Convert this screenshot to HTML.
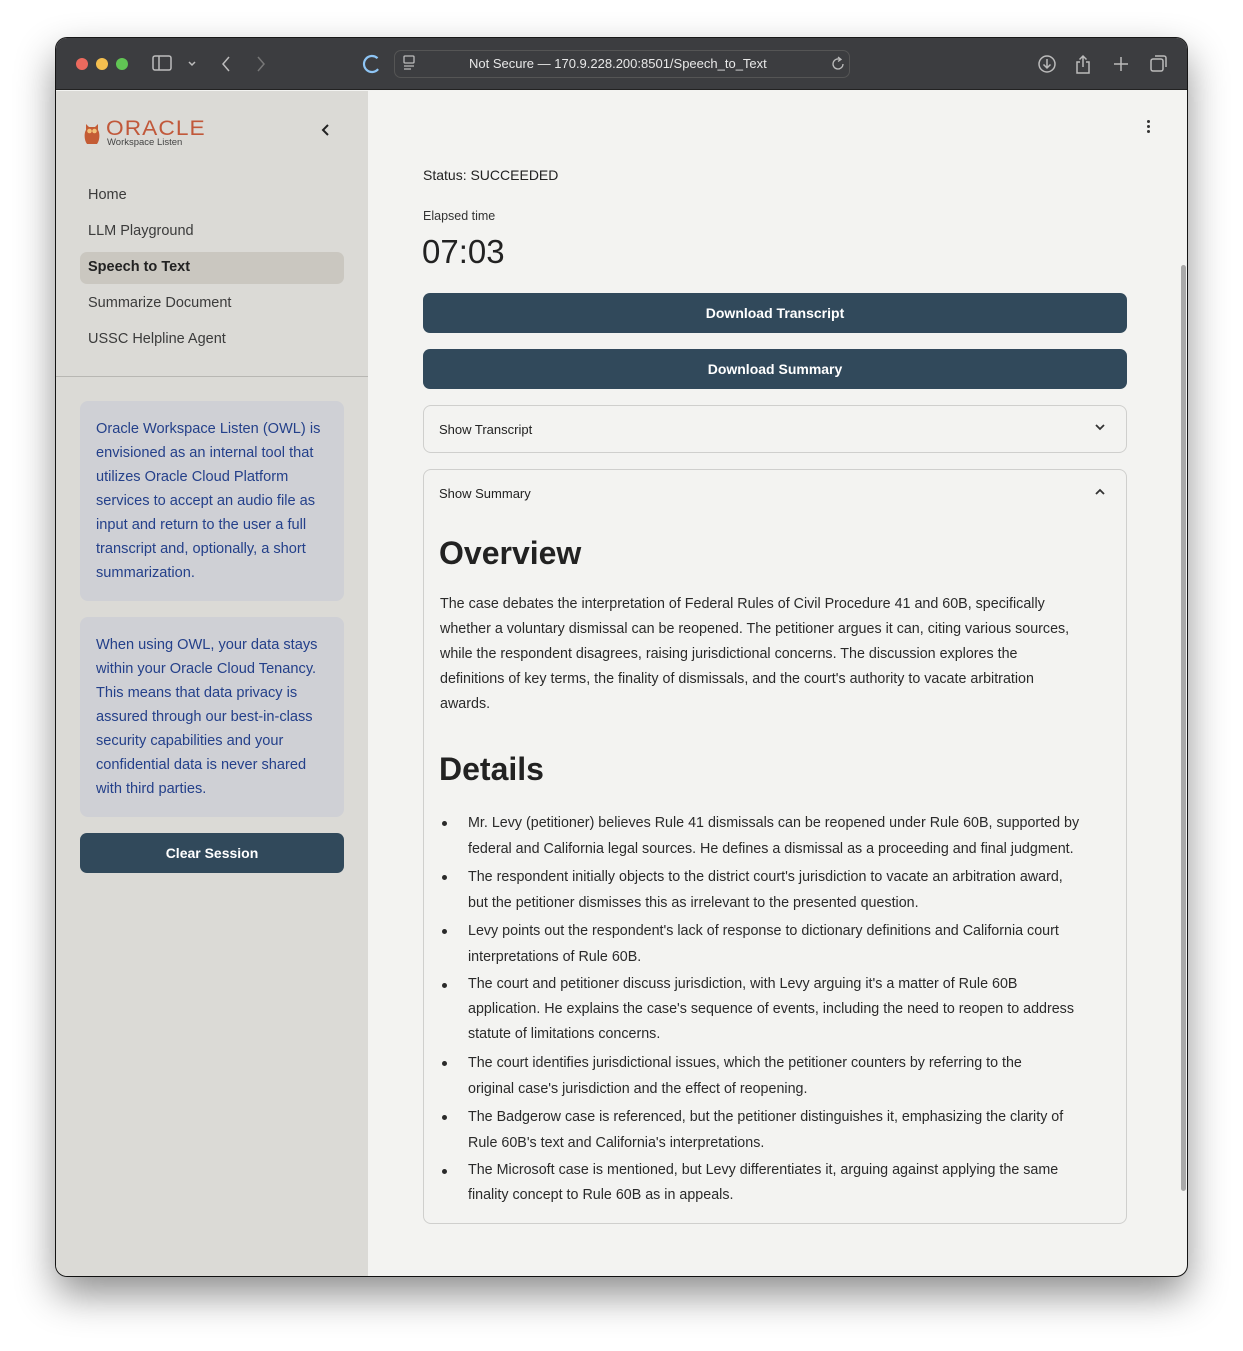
<!DOCTYPE html>
<html><head><meta charset="utf-8"><style>
*{box-sizing:border-box;margin:0;padding:0}
body{width:1243px;height:1351px;background:#fff;font-family:"Liberation Sans",sans-serif;position:relative;overflow:hidden}
.win{position:absolute;left:56px;top:38px;width:1131px;height:1238px;border-radius:11px;overflow:hidden;background:#f3f3f1;box-shadow:0 18px 40px rgba(0,0,0,.45),0 0 0 1px #1a1a1a}
.bar{position:absolute;left:0;top:0;width:100%;height:52px;background:#3c3d40;border-bottom:1px solid #222}
.side{position:absolute;left:0;top:53px;width:312px;height:1186px;background:#dbdad6}
.a{position:absolute;white-space:nowrap}
.nav{left:32px;font-size:14.5px;color:#3b3b3b}
.box{position:absolute;left:24px;width:264px;height:200px;background:#cfd0d5;border-radius:8px}
.info{left:40px;font-size:14.6px;color:#24408a}
.btn{position:absolute;background:#31495b;border-radius:7px;color:#fff;font-size:14px;font-weight:bold;text-align:center;line-height:40px;height:40px}
.exp{position:absolute;left:367px;width:704px;border:1px solid #cfcfcd;border-radius:8px}
.p{left:384px;font-size:14.3px;color:#2a2a2a}
.dot{position:absolute;left:386px;width:5px;height:5px;border-radius:50%;background:#2a2a2a}
.li{left:412px;font-size:14.3px;color:#2a2a2a}
</style></head><body>
<div class="win">
<div class="bar">
 <div style="position:absolute;left:20px;top:20px;width:12px;height:12px;border-radius:50%;background:#ec6a5e"></div>
 <div style="position:absolute;left:40px;top:20px;width:12px;height:12px;border-radius:50%;background:#f4bf4f"></div>
 <div style="position:absolute;left:60px;top:20px;width:12px;height:12px;border-radius:50%;background:#61c554"></div>
 <svg class="a" style="left:96px;top:16px" width="150" height="22" fill="none" stroke="#bdbdbd" stroke-width="1.5">
  <rect x="1" y="2" width="18" height="14" rx="2"/><line x1="7" y1="2" x2="7" y2="16"/>
  <path d="M37 8l3 3 3-3"/><path d="M77 3l-6 7 6 7"/><path d="M106 3l6 7-6 7" stroke="#777"/>
 </svg>
 <svg class="a" style="left:305px;top:15px" width="22" height="22"><circle cx="11" cy="11" r="8" fill="none" stroke="#8ec5f5" stroke-width="2.2" stroke-dasharray="38 12" transform="rotate(40 11 11)"/></svg>
 <div style="position:absolute;left:338px;top:12px;width:456px;height:28px;border:1px solid #555;border-radius:7px;background:#3c3d40"></div>
 <svg class="a" style="left:346px;top:17px" width="14" height="18" fill="none" stroke="#bbb" stroke-width="1.3"><rect x="2" y="1" width="10" height="7" rx="1"/><line x1="2" y1="11" x2="12" y2="11"/><line x1="2" y1="14" x2="9" y2="14"/></svg>
 <div class="a" style="left:413px;top:18px;font-size:13px;color:#e8e8e8">Not Secure — 170.9.228.200:8501/Speech_to_Text</div>
 <svg class="a" style="left:774px;top:18px" width="16" height="16" fill="none" stroke="#bbb" stroke-width="1.3"><path d="M13 8a5 5 0 1 1-3-4.6"/><path d="M8 1l3 2.4-3 2"/></svg>
 <svg class="a" style="left:980px;top:15px" width="140" height="22" fill="none" stroke="#bbb" stroke-width="1.5">
  <circle cx="11" cy="11" r="8"/><path d="M11 6v9M7.5 11.5l3.5 3.5 3.5-3.5"/>
  <path d="M44 9h-3v11h12V9h-3M47 3v11M43.5 6.5L47 3l3.5 3.5"/>
  <path d="M85 4v14M78 11h14"/>
  <rect x="115" y="6" width="12" height="12" rx="2"/><path d="M119 3h9a2 2 0 0 1 2 2v9"/>
 </svg>
</div>
<div class="side">
 <svg class="a" style="left:26px;top:29px" width="20" height="28"><path d="M4 4l3 3h6l3-3v6c2 3 2 10-1 14h-10c-3-4-3-11-1-14z" fill="#c45c35"/><circle cx="7.5" cy="11" r="2.3" fill="#f2c27a"/><circle cx="12.5" cy="11" r="2.3" fill="#f2c27a"/></svg>
 <div class="a" style="left:50px;top:26px;font-size:21px;color:#c1583a;letter-spacing:1px;transform:scaleX(1.08);transform-origin:left">ORACLE</div>
 <div class="a" style="left:51px;top:46px;font-size:9.5px;color:#444">Workspace Listen</div>
 <svg class="a" style="left:264px;top:32px" width="12" height="14" fill="none" stroke="#222" stroke-width="2"><path d="M8 2L3 7l5 5"/></svg>
 <div class="a nav" style="top:96px">Home</div>
 <div class="a nav" style="top:132px">LLM Playground</div>
 <div style="position:absolute;left:24px;top:161px;width:264px;height:32px;background:#cac7c0;border-radius:7px"></div>
 <div class="a nav" style="top:168px;font-weight:bold;color:#222">Speech to Text</div>
 <div class="a nav" style="top:204px">Summarize Document</div>
 <div class="a nav" style="top:240px">USSC Helpline Agent</div>
 <div style="position:absolute;left:0;top:285px;width:312px;height:1px;background:#b8b7b3"></div>
 <div class="box" style="top:310px"></div>
 <div class="a info" style="top:326px;line-height:24px">Oracle Workspace Listen (OWL) is<br>envisioned as an internal tool that<br>utilizes Oracle Cloud Platform<br>services to accept an audio file as<br>input and return to the user a full<br>transcript and, optionally, a short<br>summarization.</div>
 <div class="box" style="top:526px"></div>
 <div class="a info" style="top:542px;line-height:24px">When using OWL, your data stays<br>within your Oracle Cloud Tenancy.<br>This means that data privacy is<br>assured through our best-in-class<br>security capabilities and your<br>confidential data is never shared<br>with third parties.</div>
 <div class="btn" style="left:24px;top:742px;width:264px">Clear Session</div>
</div>
<div style="position:absolute;left:1091px;top:82px;width:4px;height:14px">
 <div style="width:3px;height:3px;border-radius:50%;background:#333;margin-bottom:2px"></div><div style="width:3px;height:3px;border-radius:50%;background:#333;margin-bottom:2px"></div><div style="width:3px;height:3px;border-radius:50%;background:#333"></div></div>
<div class="a" style="left:367px;top:129px;font-size:14px;color:#222">Status: SUCCEEDED</div>
<div class="a" style="left:367px;top:171px;font-size:12.5px;color:#333">Elapsed time</div>
<div class="a" style="left:366px;top:195px;font-size:33px;color:#222">07:03</div>
<div class="btn" style="left:367px;top:255px;width:704px">Download Transcript</div>
<div class="btn" style="left:367px;top:311px;width:704px">Download Summary</div>
<div class="exp" style="top:367px;height:48px"></div>
<div class="a" style="left:383px;top:384px;font-size:13px;color:#222">Show Transcript</div>
<svg class="a" style="left:1038px;top:385px" width="12" height="10" fill="none" stroke="#333" stroke-width="1.8"><path d="M2 2l4 4 4-4"/></svg>
<div class="exp" style="top:431px;height:755px"></div>
<div class="a" style="left:383px;top:448px;font-size:13px;color:#222">Show Summary</div>
<svg class="a" style="left:1038px;top:449px" width="12" height="10" fill="none" stroke="#333" stroke-width="1.8"><path d="M2 7l4-4 4 4"/></svg>
<div class="a" style="left:383px;top:497px;font-size:32px;font-weight:bold;color:#222">Overview</div>
<div class="a p" style="top:554px;line-height:25px">The case debates the interpretation of Federal Rules of Civil Procedure 41 and 60B, specifically<br>whether a voluntary dismissal can be reopened. The petitioner argues it can, citing various sources,<br>while the respondent disagrees, raising jurisdictional concerns. The discussion explores the<br>definitions of key terms, the finality of dismissals, and the court's authority to vacate arbitration<br>awards.</div>
<div class="a" style="left:383px;top:713px;font-size:32px;font-weight:bold;color:#222">Details</div>
<div class="dot" style="top:783px"></div><div class="a li" style="top:772px;line-height:26px">Mr. Levy (petitioner) believes Rule 41 dismissals can be reopened under Rule 60B, supported by<br>federal and California legal sources. He defines a dismissal as a proceeding and final judgment.</div>
<div class="dot" style="top:837px"></div><div class="a li" style="top:826px;line-height:26px">The respondent initially objects to the district court's jurisdiction to vacate an arbitration award,<br>but the petitioner dismisses this as irrelevant to the presented question.</div>
<div class="dot" style="top:891px"></div><div class="a li" style="top:880px;line-height:26px">Levy points out the respondent's lack of response to dictionary definitions and California court<br>interpretations of Rule 60B.</div>
<div class="dot" style="top:945px"></div><div class="a li" style="top:934px;line-height:25px">The court and petitioner discuss jurisdiction, with Levy arguing it's a matter of Rule 60B<br>application. He explains the case's sequence of events, including the need to reopen to address<br>statute of limitations concerns.</div>
<div class="dot" style="top:1023px"></div><div class="a li" style="top:1012px;line-height:26px">The court identifies jurisdictional issues, which the petitioner counters by referring to the<br>original case's jurisdiction and the effect of reopening.</div>
<div class="dot" style="top:1077px"></div><div class="a li" style="top:1066px;line-height:26px">The Badgerow case is referenced, but the petitioner distinguishes it, emphasizing the clarity of<br>Rule 60B's text and California's interpretations.</div>
<div class="dot" style="top:1131px"></div><div class="a li" style="top:1120px;line-height:25px">The Microsoft case is mentioned, but Levy differentiates it, arguing against applying the same<br>finality concept to Rule 60B as in appeals.</div>
<div style="position:absolute;left:1125px;top:227px;width:5px;height:926px;background:#a9a9a9;border-radius:3px"></div>
</div>
</body></html>
